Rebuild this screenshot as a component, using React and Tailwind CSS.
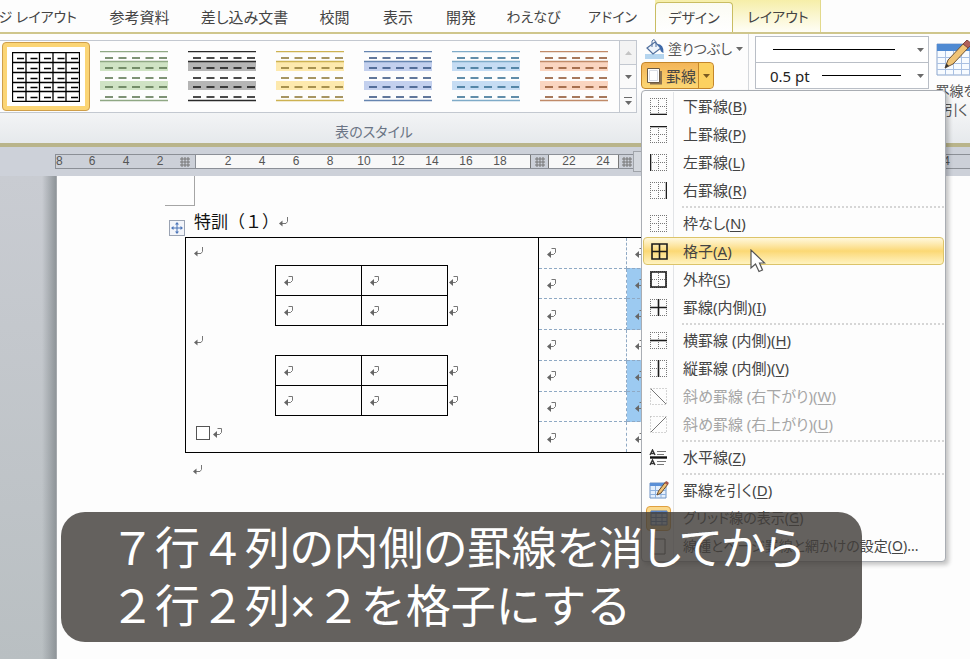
// App.jsx

import React from 'react';

const tabs = [
  { label: '参考資料', style: 'w-[93px]' },
  { label: '差し込み文書', style: 'w-[117px]' },
  { label: '校閲', style: 'w-[63px]' },
  { label: '表示', style: 'w-[64px]' },
  { label: '開発', style: 'w-[62px]' },
  { label: 'わえなび', style: 'w-[83px] text-[14px]' },
  { label: 'アドイン', style: 'w-[75px] text-[14px]' },
];

const tableStyles = [
  { name: '緑', line: '#8fa884', band: '#cfe3c4', dash: '#55704a' },
  { name: '黒', line: '#2a2a2a', band: '#b5b5b5', dash: '#111111' },
  { name: '黄', line: '#cdb252', band: '#fde9ad', dash: '#8a7430' },
  { name: '青', line: '#6685b0', band: '#c3d0ee', dash: '#2f4c7c' },
  { name: '水色', line: '#7fabc8', band: '#c5dcf3', dash: '#2f6a8e' },
  { name: '橙', line: '#c08a68', band: '#fad5c0', dash: '#8a4e28' },
];

const menuItems = [
  { icon: 'bottom', label: '下罫線', hotkey: 'B' },
  { icon: 'top', label: '上罫線', hotkey: 'P' },
  { icon: 'left', label: '左罫線', hotkey: 'L' },
  { icon: 'right', label: '右罫線', hotkey: 'R' },
  { separator: true },
  { icon: 'none', label: '枠なし', hotkey: 'N' },
  { icon: 'all', label: '格子', hotkey: 'A', active: true },
  { icon: 'outside', label: '外枠', hotkey: 'S' },
  { icon: 'inside', label: '罫線(内側)', hotkey: 'I' },
  { separator: true },
  { icon: 'horizontal', label: '横罫線 (内側)', hotkey: 'H' },
  { icon: 'vertical', label: '縦罫線 (内側)', hotkey: 'V' },
  { icon: 'down', label: '斜め罫線 (右下がり)', hotkey: 'W', disabled: true },
  { icon: 'up', label: '斜め罫線 (右上がり)', hotkey: 'U', disabled: true },
  { separator: true },
  { icon: 'rule', label: '水平線', hotkey: 'Z' },
  { separator: true },
  { icon: 'draw', label: '罫線を引く', hotkey: 'D' },
  { icon: 'grid', label: 'グリッド線の表示', hotkey: 'G', checked: true, small: true },
  { icon: 'page', label: '線種とページ罫線と網かけの設定', hotkey: 'O', suffix: '...', small: true },
];

const borderPaths = {
  bottom: 'M0 16.5H17',
  top: 'M0 .5H17',
  left: 'M.5 0V17',
  right: 'M16.5 0V17',
  none: '',
  all: 'M1 1H16V16H1ZM8.5 1V16M1 8.5H16',
  outside: 'M1 1H16V16H1Z',
  inside: 'M8.5 0V17M0 8.5H17',
  horizontal: 'M0 8.5H17',
  vertical: 'M8.5 0V17',
};

function Caret({ className = 'text-[#6a6a6a]' }) {
  return (
    <svg width="7" height="4" viewBox="0 0 7 4" className={className} aria-hidden="true">
      <path d="M0 0H7L3.5 4Z" fill="currentColor" />
    </svg>
  );
}

function BorderIcon({ kind }) {
  if (kind === 'rule') {
    return (
      <svg width="19" height="17" viewBox="0 0 19 17" fill="none" aria-hidden="true">
        <path d="M1 6L3.5 1L6 6M2 4.5H5M1 16L3.5 11L6 16M2 14.5H5" stroke="#333" strokeWidth="1.4" />
        <path d="M8 2.5H17M8 5.5H15M8 12.5H17M8 15.5H15" stroke="#777" />
        <path d="M1 8.5H18" stroke="#111" strokeWidth="2.4" />
      </svg>
    );
  }
  if (kind === 'draw') {
    return (
      <svg width="20" height="20" viewBox="0 0 20 20" fill="none" aria-hidden="true">
        <path d="M1 3H17V18H1Z" fill="#e4effc" stroke="#6e93c4" />
        <path d="M1 3H17V6H1Z" fill="#5a8fd6" />
        <path d="M1 10.5H17M1 14.5H17M6.5 6V18M12 6V18" stroke="#8fb2de" />
        <path d="M8 15L9.500 11L16.500 2L19 4L12 13Z" fill="#eec074" stroke="#6a4a2a" />
        <path d="M15.500 3L17.500 1L20 3L18.3 5Z" fill="#a6564c" />
      </svg>
    );
  }
  if (kind === 'grid') {
    return (
      <svg width="18" height="16" viewBox="0 0 18 16" fill="none" aria-hidden="true">
        <path d="M1 1H17V15H1Z" fill="#c9dbf5" stroke="#5272a6" />
        <path d="M1 1H17V4H1Z" fill="#5a86c8" />
        <path d="M1 7.5H17M1 11.5H17M6 1V15M12 1V15" stroke="#5a7fb5" />
      </svg>
    );
  }
  if (kind === 'page') {
    return (
      <svg width="14" height="17" viewBox="0 0 14 17" fill="none" aria-hidden="true">
        <path d="M1 1H13V16H1Z" fill="#fff" stroke="#555" />
      </svg>
    );
  }
  if (kind === 'down' || kind === 'up') {
    return (
      <svg width="17" height="17" viewBox="0 0 17 17" fill="none" aria-hidden="true">
        <path d="M.5 .5H16.5V16.5H.5Z" stroke="#aaa" strokeDasharray="1 2" />
        <path d={kind === 'down' ? 'M1 1L16 16' : 'M16 1L1 16'} stroke="#777" />
      </svg>
    );
  }
  return (
    <svg width="17" height="17" viewBox="0 0 17 17" fill="none" aria-hidden="true">
      {kind !== 'all' && (
        <path
          d="M0 .5H17M0 8.5H17M0 16.5H17M.5 0V17M8.5 0V17M16.5 0V17"
          stroke="#777"
          strokeDasharray="1 1"
        />
      )}
      <path d={borderPaths[kind]} stroke="#1c1c1c" strokeWidth="1.6" />
    </svg>
  );
}

// Paragraph and end-of-cell marks
function Mark({ cell = false }) {
  return (
    <svg width="10" height="11" viewBox="0 0 10 11" fill="none" className="shrink-0" aria-hidden="true">
      {cell ? (
        <>
          <path d="M4.500 1.500H8.500V5.500L6.500 7.500H4" stroke="#777" />
          <path d="M0 7.500L4 4V11Z" fill="#666" />
        </>
      ) : (
        <>
          <path d="M8.500 1V5.500L7 7.500H2" stroke="#777" />
          <path d="M0 7.500L3.500 4.500V10.500Z" fill="#666" />
        </>
      )}
    </svg>
  );
}

function StyleThumb({ line, band, dash }) {
  return (
    <svg width="68" height="51" viewBox="0 0 68 51" fill="none" aria-hidden="true">
      <path d="M0 11H68V20H0ZM0 30H68V39H0Z" fill={band} />
      <path d="M0 .5H68M0 10.500H68M0 49.500H68" stroke={line} strokeWidth="1.500" />
      <path
        d="M5 7H68M5 17H68M5 27H68M5 36H68M5 46H68"
        stroke={dash}
        strokeWidth="1.500"
        strokeDasharray="8 5.500"
      />
    </svg>
  );
}

function GridThumb() {
  return (
    <svg width="68" height="50" viewBox="0 0 68 50" fill="none" aria-hidden="true">
      <path
        d="M.5 .5H67.500V49.500H.5ZM.5 10.500H67.500M.5 20.500H67.500M.5 30.500H67.500M.5 39.500H67.500M14 .5V49.500M27.500 .5V49.500M41 .5V49.500M54 .5V49.500"
        stroke="#000"
        strokeWidth="1.300"
      />
      <path
        d="M5 6.500H66M5 16.500H66M5 26.500H66M5 35.500H66M5 45.500H66"
        stroke="#000"
        strokeWidth="1.300"
        strokeDasharray="7 6.500"
      />
    </svg>
  );
}

function TabBar() {
  return (
    <nav className="flex h-[34px] shrink-0 overflow-hidden border-b-2 border-[#cfc68c] bg-[#fdfdfd] text-[15px] leading-[34px] text-[#444]">
      <a href="#layout" className="flex w-[93px] shrink-0 justify-end pr-4 text-[14px] whitespace-nowrap">
        ージ レイアウト
      </a>
      {tabs.map((tab) => (
        <a key={tab.label} href={`#${tab.label}`} className={`${tab.style} shrink-0 text-center whitespace-nowrap`}>
          {tab.label}
        </a>
      ))}
      <div className="ml-[5px] flex shrink-0 border-r border-[#e2d98c] bg-gradient-to-b from-[#f6eea8] to-[#fffef6] text-[14px]">
        <a
          href="#design"
          className="mt-[2px] w-[78px] rounded-t border border-b-0 border-[#c9bd62] bg-gradient-to-b from-[#fbfbf3] to-white text-center leading-[29px] whitespace-nowrap"
        >
          デザイン
        </a>
        <a href="#table-layout" className="w-[87px] pl-[3px] text-center whitespace-nowrap">
          レイアウト
        </a>
      </div>
    </nav>
  );
}

function StyleGallery() {
  return (
    <div className="mt-[6px] flex h-[73px] shrink-0 border-y border-[#c3c8d0] bg-[#fdfdfd]">
      <div className="flex items-center pr-px pl-[2px]">
        <button
          type="button"
          aria-label="表 (格子)"
          className="flex h-[69px] w-[88px] items-center justify-center rounded border border-[#cf9f4a] bg-[#fbd575] p-1"
        >
          <span className="flex h-full w-full items-center justify-center bg-white">
            <GridThumb />
          </span>
        </button>
        {tableStyles.map((s) => (
          <button
            key={s.name}
            type="button"
            aria-label={`表スタイル ${s.name}`}
            className="flex h-[69px] w-[88px] items-center justify-center"
          >
            <StyleThumb {...s} />
          </button>
        ))}
      </div>
      <div className="flex w-[18px] flex-col divide-y divide-[#c3c8d0] border-x border-[#c3c8d0] bg-[#fafafa]">
        <button type="button" aria-label="上へ" className="flex flex-1 items-center justify-center bg-[#f3f3f3]">
          <Caret className="rotate-180 text-[#c4c4c4]" />
        </button>
        <button type="button" aria-label="下へ" className="flex flex-1 items-center justify-center">
          <Caret />
        </button>
        <button type="button" aria-label="その他" className="flex flex-1 flex-col items-center justify-center gap-[3px]">
          <span className="h-px w-2 bg-[#6a6a6a]" />
          <Caret />
        </button>
      </div>
    </div>
  );
}

function BordersMenu() {
  return (
    <div
      role="menu"
      className="absolute top-full left-0 z-10 mt-px w-[305px] rounded-sm border border-[#a9adb3] bg-[#fdfdfd] p-px text-[15px] text-[#444] shadow-[3px_3px_4px_rgba(0,0,0,0.22)]"
    >
      {menuItems.map((item, i) =>
        item.separator ? (
          <div key={i} role="separator" className="flex h-[5px]">
            <span className="w-[31px] border-r border-[#e2e4e7]" />
            <span className="mt-[2px] ml-2 h-0 flex-1 border-t-2 border-dotted border-[#d6d6d6]" />
          </div>
        ) : (
          <button
            key={i}
            type="button"
            role="menuitem"
            disabled={item.disabled}
            className={
              item.active
                ? 'flex h-7 w-full items-center rounded border border-[#dcc46a] bg-gradient-to-b from-[#fff8dc] via-[#fbd874] to-[#fff3c0] text-left leading-7 whitespace-nowrap'
                : item.disabled
                  ? 'flex h-7 w-full items-center border border-transparent text-left leading-7 whitespace-nowrap text-[#a6a6a6]'
                  : 'flex h-7 w-full items-center border border-transparent text-left leading-7 whitespace-nowrap'
            }
          >
            <span
              className={
                item.active
                  ? 'flex w-[30px] shrink-0 items-center justify-center'
                  : 'flex h-7 w-[30px] shrink-0 items-center justify-center border-r border-[#e2e4e7]'
              }
            >
              {item.checked ? (
                <span className="flex h-[25px] w-[25px] items-center justify-center rounded border border-[#e0a040] bg-[#fbd98c]">
                  <BorderIcon kind={item.icon} />
                </span>
              ) : (
                <BorderIcon kind={item.icon} />
              )}
            </span>
            <span className={item.small ? 'pl-[9px] text-[14px]' : 'pl-[9px]'}>
              {item.label}(<u className="underline-offset-2">{item.hotkey}</u>){item.suffix}
            </span>
          </button>
        )
      )}
      <svg
        width="16"
        height="24"
        viewBox="0 0 16 24"
        className="pointer-events-none absolute top-[158px] left-[108px]"
        aria-hidden="true"
      >
        <path
          d="M1 1V19L5.500 15L9 22.500L12.500 21L9.500 14H14.500Z"
          fill="#fff"
          stroke="#555"
          strokeWidth="1.200"
        />
      </svg>
    </div>
  );
}

function ShadingTools() {
  return (
    <div className="ml-1 flex flex-col pt-[2px]">
      <button type="button" className="flex h-[26px] items-center pl-1 text-[14px] text-[#555] whitespace-nowrap">
        <svg width="20" height="20" viewBox="0 0 20 20" fill="none" aria-hidden="true">
          <path d="M0 15H19V20H0Z" fill="#b5d5ef" />
          <path d="M2 9L10 3L16 9L8 15Z" fill="#eef4fb" stroke="#51709e" strokeWidth="1.200" />
          <path d="M7 8V2Q9 -1 11 3V8" stroke="#51709e" />
          <path d="M12 5Q19 5 18.500 14Q15 13 15 9Z" fill="#3e69a8" />
        </svg>
        <span className="ml-[3px] leading-[26px]">塗りつぶし</span>
        <span className="ml-1">
          <Caret />
        </span>
      </button>
      <div className="relative">
        <div className="flex h-[27px] w-[73px] rounded border border-[#c4862a] bg-gradient-to-b from-[#f3b559] to-[#fcd774]">
          <button type="button" className="flex flex-1 items-center pl-1 text-[15px] leading-6 text-[#444]">
            <svg width="17" height="18" viewBox="0 0 17 18" fill="none" aria-hidden="true">
              <path d="M4 4H16V17.500H4Z" fill="#8c7350" />
              <path d="M1.500 1.500H13.500V15.500H1.500Z" fill="#fff" stroke="#6b5a44" />
              <path d="M3.500 3.500H11.500V13.500H3.500Z" stroke="#d8dce4" />
            </svg>
            <span className="ml-[3px] whitespace-nowrap">罫線</span>
          </button>
          <button
            type="button"
            aria-label="罫線のメニュー"
            className="flex w-[15px] items-center justify-center rounded-r border-l border-[#c4862a] bg-[#fcd160]"
          >
            <Caret className="text-[#7a5a20]" />
          </button>
        </div>
        <BordersMenu />
      </div>
    </div>
  );
}

function LinePickers() {
  return (
    <div className="mt-[2px] ml-[6px] flex h-[53px] w-[174px] shrink-0 flex-col divide-y divide-[#b9bec6] border border-[#b9bec6] bg-white">
      <div className="relative flex-1">
        <select aria-label="ペンのスタイル" className="h-full w-full appearance-none" />
        <div className="pointer-events-none absolute inset-0 flex items-center pr-1 pl-[17px]">
          <span className="h-0 w-[122px] border-t border-black" />
          <span className="ml-auto">
            <Caret />
          </span>
        </div>
      </div>
      <div className="relative flex-1">
        <select aria-label="ペンの太さ" className="h-full w-full appearance-none pl-[14px] text-[15px] leading-6 text-[#222]">
          <option>0.5 pt</option>
        </select>
        <div className="pointer-events-none absolute inset-0 flex items-center pr-1 pl-[66px]">
          <span className="h-0 w-[79px] border-t border-black" />
          <span className="ml-auto">
            <Caret />
          </span>
        </div>
      </div>
    </div>
  );
}

function Ribbon() {
  return (
    <div className="flex h-[113px] shrink-0 border-b-4 border-[#b9b48a] bg-gradient-to-b from-[#fdfdfd] from-50% to-[#e6e9ec]">
      <section className="flex w-[749px] shrink-0 flex-col border-r border-[#d5d8dc]">
        <div className="flex">
          <StyleGallery />
          <ShadingTools />
        </div>
        <p className="mt-[5px] text-center text-[14px] leading-7 text-[#6a7484]">表のスタイル</p>
      </section>
      <LinePickers />
      <div className="flex-1 overflow-hidden pt-[6px] pl-1">
        <button type="button" className="flex w-[46px] flex-col items-center text-[14px] leading-[19px] text-[#555]">
          <svg width="42" height="36" viewBox="0 0 42 36" fill="none" aria-hidden="true">
            <path d="M2 4H40V35H2Z" fill="#f7fbff" stroke="#8aa5cd" />
            <path d="M2 4H40V11H2Z" fill="#4f8ad2" />
            <path d="M2 17.500H40M2 23.500H40M2 29.500H40M10.500 11V35M18.500 11V35M26.500 11V35M34.500 11V35" stroke="#a9c0e2" />
            <path d="M10 28L13 20L29 3L34 7L18 24Z" fill="#f0c476" stroke="#6e5336" />
            <path d="M10 28L11.500 23.500L14 26Z" fill="#333" />
            <path d="M28 4L32 0L37 4L33 8Z" fill="#b0605a" stroke="#7b4440" />
          </svg>
          <span className="mt-[5px] whitespace-nowrap">罫線を</span>
          <span className="whitespace-nowrap">引く</span>
        </button>
      </div>
    </div>
  );
}

function ColumnMarker() {
  return (
    <svg width="10" height="10" viewBox="0 0 10 10" className="shrink-0" aria-hidden="true">
      <path d="M2 0V10M5 0V10M8 0V10M0 2H10M0 5H10M0 8H10" stroke="#777" />
    </svg>
  );
}

function RulerNumbers({ values }) {
  return values.map((n) => (
    <span key={n} className="w-[34px] shrink-0 text-center">
      {n}
    </span>
  ));
}

function Ruler() {
  return (
    <div className="h-[29px] shrink-0 bg-[#cdd1d9] pt-[7px] pl-[55px]">
      <div className="flex h-[15px] border-y border-l border-[#8b8f96] bg-[#ccd0d8] font-['Liberation_Sans',Arial,sans-serif] text-[12px] leading-[13px] text-[#555]">
        <div className="flex w-[139px] shrink-0 items-center">
          <span className="w-[19px]">8</span>
          <RulerNumbers values={[6, 4, 2]} />
          <span className="ml-[3px]">
            <ColumnMarker />
          </span>
        </div>
        <div className="flex w-[335px] shrink-0 border-l border-[#8b8f96] bg-[#f8f8f8] pl-[15px]">
          <RulerNumbers values={[2, 4, 6, 8, 10, 12, 14, 16, 18]} />
        </div>
        <div className="flex w-[19px] shrink-0 items-center justify-center border-x border-[#777]">
          <ColumnMarker />
        </div>
        <div className="flex w-[69px] shrink-0 bg-[#f8f8f8] pl-[3px]">
          <RulerNumbers values={[22, 24]} />
        </div>
        <div className="flex flex-1 items-center justify-between border-l border-[#777] pr-5 pl-[3px]">
          <div className="flex items-center gap-px">
            <ColumnMarker />
            <span className="h-[21px] w-[11px] border border-[#a0a4aa] bg-[#d4d8de]" />
          </div>
          <span>4</span>
        </div>
      </div>
    </div>
  );
}

function InnerTable() {
  return (
    <div className="flex pl-[89px]">
      <table className="h-[61px] w-[173px] shrink-0 table-fixed border-collapse">
        <tbody>
          {[0, 1].map((r) => (
            <tr key={r}>
              <td className="border border-black p-0 pl-2">
                <Mark cell />
              </td>
              <td className="border border-black p-0 pl-2">
                <Mark cell />
              </td>
            </tr>
          ))}
        </tbody>
      </table>
      <div className="flex flex-col justify-around pl-px">
        <Mark cell />
        <Mark cell />
      </div>
    </div>
  );
}

function OuterTable() {
  const rows = [0, 1, 2, 3, 4, 5, 6];
  const selected = [1, 2, 4, 5];
  return (
    <table className="h-[216px] w-[705px] table-fixed border-collapse border border-black">
      <colgroup>
        <col className="w-[353px]" />
        <col className="w-[88px]" />
        <col />
        <col />
        <col />
      </colgroup>
      <tbody>
        {rows.map((r) => (
          <tr key={r}>
            {r === 0 && (
              <td rowSpan={7} className="border border-black p-0 align-top">
                <div className="flex h-[27px] items-center pl-2">
                  <Mark />
                </div>
                <InnerTable />
                <div className="flex h-[29px] items-center pl-2">
                  <Mark />
                </div>
                <InnerTable />
                <div className="flex h-[33px] items-center gap-[3px] pl-[10px]">
                  <input
                    type="checkbox"
                    aria-label="完了"
                    className="h-[14px] w-[14px] appearance-none border border-[#555] bg-white"
                  />
                  <Mark cell />
                </div>
              </td>
            )}
            <td className="border border-dashed border-[#8fa9c4] border-l-black p-0 pl-2 [border-left-style:solid]">
              <Mark cell />
            </td>
            {[1, 2, 3].map((c) => (
              <td
                key={c}
                className={
                  selected.includes(r)
                    ? 'border border-dashed border-[#8fa9c4] bg-[#9ccaf1] p-0 pl-2'
                    : 'border border-dashed border-[#8fa9c4] p-0 pl-2'
                }
              >
                <Mark cell />
              </td>
            ))}
          </tr>
        ))}
      </tbody>
    </table>
  );
}

function DocumentArea() {
  return (
    <div className="flex flex-1 bg-gradient-to-b from-[#c9ccd2] to-[#b9bfc2]">
      <div className="w-[56px] shrink-0 bg-gradient-to-r from-transparent from-75% to-[#8f9599]" />
      <article className="flex-1 overflow-hidden border-l border-[#a5a9ad] bg-[#fdfdfd] pl-[108px]">
        <div className="h-[30px] w-[30px] border-r border-b border-[#a5a5a5]" />
        <div className="flex h-[31px] pl-1">
          <button
            type="button"
            aria-label="表の移動"
            className="mt-[14px] flex h-4 w-4 shrink-0 items-center justify-center border border-[#9aa3b3] bg-[#f3f5fa]"
          >
            <svg width="12" height="12" viewBox="0 0 12 12" fill="#4a74b8" aria-hidden="true">
              <path d="M5.500 2H6.500V5.500H10V6.500H6.500V10H5.500V6.500H2V5.500H5.500Z" />
              <path d="M6 0L8 2.500H4ZM6 12L4 9.500H8ZM0 6L2.500 4V8ZM12 6L9.500 8V4Z" />
            </svg>
          </button>
          <h1 className="ml-[9px] flex items-center text-[17px] leading-[29px] text-[#111] [font-feature-settings:normal]">
            特訓（１）
            <Mark />
          </h1>
        </div>
        <div className="pl-5">
          <OuterTable />
          <div className="mt-[11px] pl-2">
            <Mark />
          </div>
        </div>
      </article>
    </div>
  );
}

function Caption() {
  return (
    <div className="absolute inset-x-0 top-[512px] z-20 mr-[108px] ml-[61px] rounded-3xl bg-[#423e3a]/82 py-[7px] pl-[49px] text-[45px] leading-[58px] text-white">
      <p className="whitespace-nowrap">
        <span className="[font-feature-settings:normal]">７行４列</span>の内側の罫線を消してから
      </p>
      <p className="whitespace-nowrap [font-feature-settings:normal]">２行２列×２を格子にする</p>
    </div>
  );
}

function App() {
  return (
    <div className="relative flex min-h-screen flex-col overflow-hidden bg-white font-['Noto_Sans','Noto_Sans_CJK_JP',sans-serif] [font-feature-settings:'palt']">
      <TabBar />
      <Ribbon />
      <Ruler />
      <DocumentArea />
      <Caption />
    </div>
  );
}

export default App;
